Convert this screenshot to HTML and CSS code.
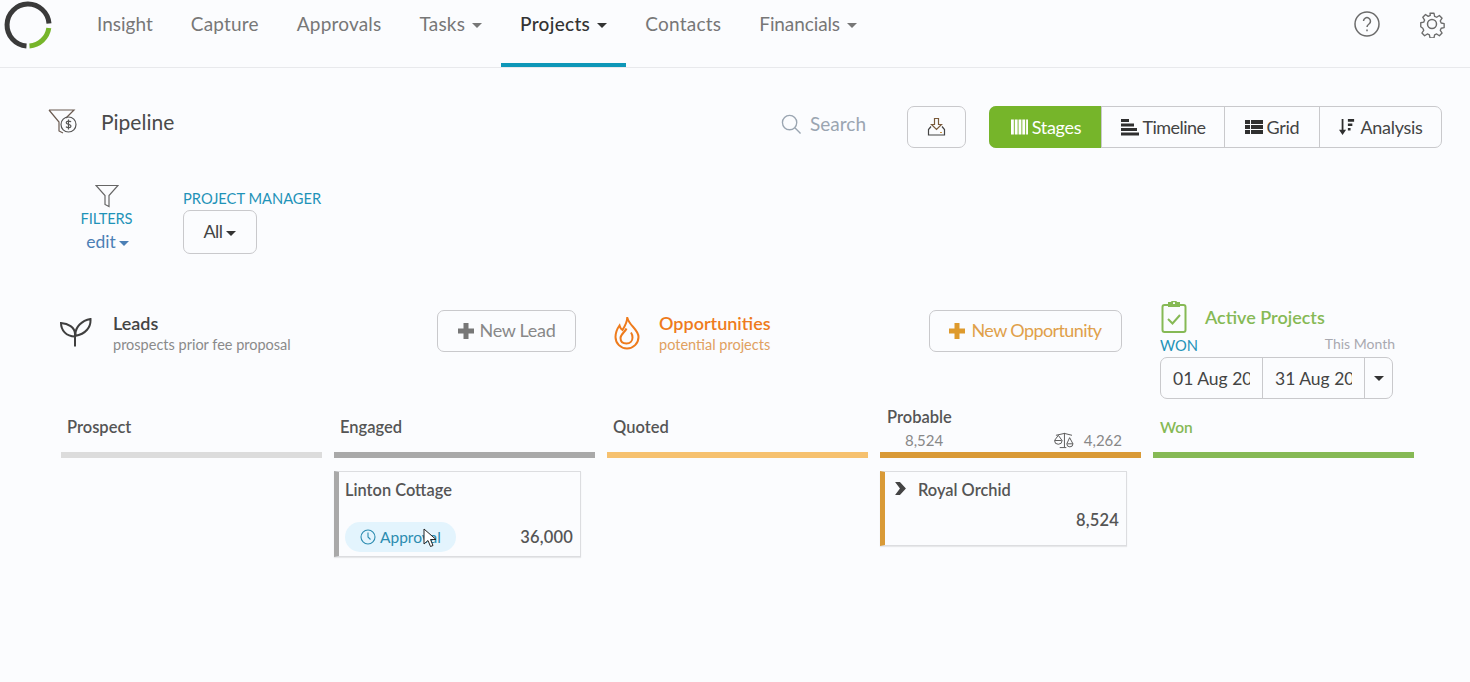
FILE: index.html
```html
<!DOCTYPE html>
<html lang="en">
<head>
<meta charset="utf-8">
<title>Pipeline</title>
<link rel="stylesheet" href="styles.css">
</head>
<body>
<header class="topbar">
  <svg class="logo" viewBox="0 0 48 48" width="48" height="48" fill="none" stroke-width="5">
    <path d="M45 22.500A21 21 0 1 0 22.500 45" stroke="#3a3a3a"/>
    <path d="M44.800 27A21 21 0 0 1 25.500 44.900" stroke="#76b52a"/>
  </svg>
  <nav class="nav">
    <a class="nav-item">Insight</a>
    <a class="nav-item">Capture</a>
    <a class="nav-item">Approvals</a>
    <a class="nav-item">Tasks<i class="caret"></i></a>
    <a class="nav-item active">Projects<i class="caret"></i></a>
    <a class="nav-item">Contacts</a>
    <a class="nav-item">Financials<i class="caret"></i></a>
  </nav>
  <div class="top-icons">
    <svg viewBox="0 0 26 26" width="26" height="26" fill="none" stroke="#6b6b6b" stroke-width="1.500"><circle cx="13" cy="13" r="12"/><path d="M9.500 10a3.500 3.500 0 1 1 5.500 3c-1.300.9-2 1.500-2 3"/><path d="M13 18.500v1.800"/></svg>
    <svg viewBox="0 0 28 28" width="28" height="28" fill="none" stroke="#6b6b6b" stroke-width="1.500" stroke-linejoin="round"><circle cx="14" cy="14" r="4.500"/><path d="M11.800 2h4.400l.7 3.500 2.300 1 3-2 3 3.100-2 3 1 2.300 3.300.7v4.400l-3.300.7-1 2.300 2 3-3 3.100-3-2-2.300 1-.7 3.300h-4.400l-.7-3.300-2.300-1-3 2-3-3.100 2-3-1-2.300L1.500 17v-4.400l3.300-.7 1-2.300-2-3 3-3.100 3 2 2.300-1z" transform="translate(1.400 1.400) scale(.9)"/></svg>
  </div>
</header>

<main>
  <section class="title-row">
    <div class="title">
      <svg viewBox="0 0 30 26" width="30" height="26" fill="none" stroke="#555" stroke-width="1.200"><path d="M1 2h25l-8 8M1 2l10 12v9l4 2" stroke="#6a5a50"/><circle cx="20.500" cy="16.500" r="7.500"/><path d="M23 14c-1-1.300-4.800-1.300-4.800.8s4.800 1.100 4.800 3.300-4 2-5 .6M20.500 11.500v10"/></svg>
      <h1>Pipeline</h1>
    </div>
    <div class="tools">
      <div class="search">
        <svg viewBox="0 0 22 22" width="21" height="21" fill="none" stroke="#9aa5b1" stroke-width="1.400"><circle cx="9" cy="9" r="7.500"/><path d="M14.500 14.500l6 6"/></svg>
        <span>Search</span>
      </div>
      <button class="btn export">
        <svg viewBox="0 0 20 20" width="20" height="20" fill="none" stroke="#444" stroke-width="1.200"><path d="M7.500 1.500h4v6h3l-5 5-5-5h3z" stroke="#7a5a3a"/><path d="M4 9.500l-2.500 3v5.500h16v-5.500l-2.500-3"/><path d="M13 15.500h2" stroke="#c89040"/></svg>
      </button>
      <div class="views">
        <button class="view on"><svg viewBox="0 0 18 18" width="17" height="18" fill="#fff"><path d="M0 1h3v16H0zM4 1h3v16H4zM8 1h3v16H8zM12 1h3v16h-3zM16 1h2v16h-2z"/></svg>Stages</button>
        <button class="view"><svg viewBox="0 0 18 18" width="18" height="18" fill="#2f2f2f"><path d="M0 1h8v3H0zM0 5.500h13v3H0zM0 10h16v3H0zM0 14.500h18v3H0z"/></svg>Timeline</button>
        <button class="view"><svg viewBox="0 0 18 18" width="18" height="18" fill="#2f2f2f"><path d="M0 2h5v4H0zM6 2h12v4H6zM0 7h5v4H0zM6 7h12v4H6zM0 12h5v4H0zM6 12h12v4H6z"/></svg>Grid</button>
        <button class="view"><svg viewBox="0 0 18 18" width="16" height="18" fill="#2f2f2f"><path d="M3 0h2v12h3l-4 6-4-6h3zM10 0h7v3h-7zM10 5h5v3h-5zM10 10h3v3h-3z"/></svg>Analysis</button>
      </div>
    </div>
  </section>

  <section class="filter-row">
    <div class="filters">
      <svg viewBox="0 0 24 24" width="24" height="24" fill="none" stroke="#666" stroke-width="1.200"><path d="M1 1.500h22l-9 10v11l-4-2v-9z"/></svg>
      <span class="label">FILTERS</span>
      <span class="edit">edit<i class="caret blue"></i></span>
    </div>
    <div class="pm">
      <span class="label">PROJECT MANAGER</span>
      <button class="btn all">All<i class="caret dark"></i></button>
    </div>
  </section>

  <section class="groups">
    <div class="group leads">
      <svg viewBox="0 0 34 30" width="34" height="30" fill="none" stroke="#3f3f3f" stroke-width="2"><path d="M15 28.500V16C15 9 8 5.500 1 5C1 12 6 18.500 15 18.500"/><path d="M15.500 17C15 9 22 2.500 30.500 1C31 9 26 16 15 18"/></svg>
      <div class="group-text"><strong>Leads</strong><small>prospects prior fee proposal</small></div>
      <button class="btn new grey"><svg class="plus" viewBox="0 0 16 16" width="16" height="16"><path d="M5.500 0h5v5.500H16v5h-5.500V16h-5v-5.500H0v-5h5.500z"/></svg><span>New Lead</span></button>
    </div>
    <div class="group opps">
      <svg viewBox="0 0 26 34" width="26" height="34" fill="none" stroke="#ee7b1c" stroke-width="2"><path d="M13.300 1C14 9 24.500 13 24.500 21A11.500 11.500 0 0 1 1.500 21C1.500 17 3 13 5.500 9.500C6 11.500 7 13 8.500 14C11 10 13.300 6 13.300 1z"/><path d="M12.500 12.500C11 16 6.500 18.500 6.500 22C6.500 25.500 9 27.500 12.500 27.500C16 27.500 18.500 25 18.500 21.500C18.500 19.500 18 18 17 16.500"/></svg>
      <div class="group-text"><strong>Opportunities</strong><small>potential projects</small></div>
      <button class="btn new amber"><svg class="plus" viewBox="0 0 16 16" width="16" height="16"><path d="M5.500 0h5v5.500H16v5h-5.500V16h-5v-5.500H0v-5h5.500z"/></svg><span>New Opportunity</span></button>
    </div>
    <div class="group active-projects">
      <div class="ap-head">
        <svg viewBox="0 0 26 32" width="26" height="32" fill="none" stroke="#86b955" stroke-width="2"><rect x="1.500" y="4" width="23" height="27" rx="2"/><path d="M8 4V2h3a2 2 0 0 1 4 0h3v3H8z"/><path d="M7 18l4.500 4.500L19 14"/></svg>
        <strong>Active Projects</strong>
      </div>
      <div class="ap-meta"><span class="label">WON</span><span class="month">This Month</span></div>
      <div class="dates">
        <input class="date" value="01 Aug 2021" readonly>
        <input class="date" value="31 Aug 2021" readonly>
        <span class="date-caret"><i class="caret dark"></i></span>
      </div>
    </div>
  </section>

  <section class="board">
    <div class="col">
      <div class="col-head"><span class="col-name">Prospect</span></div>
      <div class="bar c1"></div>
    </div>
    <div class="col">
      <div class="col-head"><span class="col-name">Engaged</span></div>
      <div class="bar c2"></div>
      <article class="card b2 tall">
        <div class="card-name">Linton Cottage</div>
        <div class="card-foot">
          <span class="pill"><svg viewBox="0 0 16 16" width="16" height="16" fill="none" stroke="#2c8cb0" stroke-width="1.100"><circle cx="8" cy="8" r="7"/><path d="M8 3.500V8l2.500 2.500"/></svg>Approval</span>
          <span class="amount">36,000</span>
        </div>
        <svg class="cursor" viewBox="0 0 14 20" width="14" height="20"><path d="M1 1v15l4-3.500 2.500 6 2.500-1-2.500-6H13z" fill="#fff" stroke="#222" stroke-width="1"/></svg>
      </article>
    </div>
    <div class="col">
      <div class="col-head"><span class="col-name">Quoted</span></div>
      <div class="bar c3"></div>
    </div>
    <div class="col">
      <div class="col-head two">
        <span class="col-name">Probable</span>
        <div class="col-vals">
          <span>8,524</span>
          <span class="weighted"><svg viewBox="0 0 22 18" width="21" height="17" fill="none" stroke="#555" stroke-width="1"><path d="M3 3.500l9-2 8 2M12 1v15M7 16.500h7"/><path d="M5.500 3.500L1.500 9a4 4 0 0 0 8 0zM2 9h7"/><path d="M17.500 6l-3 6.500a3 3 0 0 0 6.500 0zM15 12.500h6"/></svg>4,262</span>
        </div>
      </div>
      <div class="bar c4"></div>
      <article class="card b4">
        <div class="card-name"><svg class="chev" viewBox="0 0 10 12" width="11" height="13" fill="#444"><path d="M0 0h4.500l5.500 6-5.500 6H0l4.500-6z"/></svg>Royal Orchid</div>
        <div class="card-foot end"><span class="amount">8,524</span></div>
      </article>
    </div>
    <div class="col">
      <div class="col-head"><span class="col-name won">Won</span></div>
      <div class="bar c5"></div>
    </div>
  </section>
</main>
</body>
</html>
```

FILE: styles.css
```css
* { box-sizing: border-box; }
html, body { margin: 0; height: 100%; }
body {
  background: #fbfcfe;
  font-family: "Lato", "Noto Sans", sans-serif;
  color: #444;
  overflow: hidden;
}
button { font: inherit; background: none; cursor: pointer; }

.topbar {
  display: flex;
  align-items: flex-start;
  height: 68px;
  border-bottom: 1px solid #e8e9ec;
  padding-left: 4px;
}
.logo { margin-top: 1px; flex: none; }
.nav { display: flex; margin-left: 26px; height: 67px; }
.nav-item {
  display: flex;
  align-items: flex-start;
  padding: 12px 19px 0;
  font-size: 19px;
  line-height: 24px;
  letter-spacing: .2px;
  color: #777;
  border-bottom: 4px solid transparent;
}
.nav-item:first-child { letter-spacing: 0; }
.nav-item:nth-child(6) { letter-spacing: .25px; }
.nav-item:nth-child(7) { letter-spacing: -.1px; }
.nav-item.active { color: #333; border-bottom-color: #0e97b8; font-weight: 500; letter-spacing: .3px; }
.caret {
  display: inline-block;
  width: 0;
  height: 0;
  margin: 11px 0 0 7px;
  border-left: 5px solid transparent;
  border-right: 5px solid transparent;
  border-top: 5px solid #777;
}
.active .caret, .caret.dark { border-top-color: #333; }
.caret.blue { border-top-color: #4b7fb5; }
.top-icons { margin-left: auto; display: flex; gap: 38px; padding: 10px 24px 0 0; align-items: center; }

.title-row {
  display: flex;
  justify-content: space-between;
  padding: 38px 28px 0 48px;
  height: 106px;
}
.title { display: flex; gap: 23px; align-items: flex-start; }
.title svg { margin-top: 2px; }
h1 { margin: 2px 0 0; font-size: 21px; line-height: 28px; font-weight: 400; color: #4a4a4a; }
.tools { display: flex; align-items: flex-start; }
.search { display: flex; align-items: center; gap: 8px; height: 36px; color: #9aa5b1; font-size: 19px; margin-right: 41px; }
.search span { padding-bottom: 2px; }
.btn { border: 1px solid #c9c9cc; border-radius: 7px; }
.export { width: 59px; height: 42px; margin-right: 23px; display: flex; align-items: center; justify-content: center; padding: 0; }
.views { display: flex; height: 42px; border: 1px solid #c9c9cc; border-radius: 7px; }
.view {
  display: flex; align-items: center; justify-content: center; gap: 4px;
  border: 0; border-left: 1px solid #c9c9cc; padding: 0; font-size: 18px; letter-spacing: -.3px; color: #444;
}
.view:nth-child(1) { width: 112px; border-left: 0; margin: -1px 0 -1px -1px; height: 42px; background: #76b52a; color: #fff; border-radius: 7px 0 0 7px; padding-left: 2px; }
.view:nth-child(2) { width: 123px; letter-spacing: -.55px; }
.view:nth-child(3) { width: 95px; }
.view:nth-child(4) { width: 122px; gap: 5px; padding-left: 1px; }

.filter-row { display: flex; padding-left: 81px; height: 136px; padding-top: 10px; }
.filters { display: flex; flex-direction: column; align-items: center; width: 51px; }
.label { font-size: 14.700px; line-height: 18px; color: #1f93b8; }
.filters .label { letter-spacing: -.15px; }
.filters svg { margin-bottom: 1px; }
.edit { font-size: 17.500px; line-height: 24px; margin-top: 3px; color: #4b7fb5; display: flex; padding-left: 2px; }
.edit .caret { margin-left: 3px; }
.pm { display: flex; flex-direction: column; margin-left: 51px; padding-top: 5px; }
.all { margin-top: 3px; width: 74px; height: 44px; font-size: 18px; letter-spacing: -.6px; color: #444; display: flex; align-items: flex-start; justify-content: center; padding: 9px 0 0; }
.all .caret { margin-left: 4px; }

.groups { display: flex; height: 114px; align-items: flex-start; }
.group { display: flex; align-items: flex-start; }
.leads { width: 576px; padding-left: 61px; }
.leads > svg { margin: 8px 0 0 -1px; flex: none; }
.opps { width: 508px; margin-left: 38px; }
.opps > svg { margin-top: 6px; flex: none; }
.group-text { display: flex; flex-direction: column; margin-left: 19px; padding-top: 2px; }
.group-text strong { font-size: 18px; line-height: 22px; font-weight: 600; color: #444; margin-bottom: 1px; }
.group-text small { font-size: 14.500px; line-height: 20px; color: #8a8a8a; }
.opps .group-text strong { color: #ee7b1c; }
.opps .group-text small { color: #e0a060; }
.new { margin-left: auto; height: 42px; display: flex; align-items: center; justify-content: center; gap: 6px; font-size: 18px; padding: 0; }
.new span { padding-bottom: 2px; }
.leads .new { width: 139px; letter-spacing: -.3px; }
.opps .new { width: 193px; letter-spacing: -.6px; }
.grey { color: #888; }
.amber { color: #e0a04a; }
.plus { fill: #777; }
.amber .plus { fill: #de9a2d; }
.active-projects { flex-direction: column; margin-left: 38px; margin-top: -9px; width: 236px; }
.ap-head { display: flex; align-items: center; gap: 18px; padding-left: 1px; height: 32px; }
.ap-head strong { font-size: 18px; font-weight: 600; color: #86b955; }
.ap-meta { display: flex; justify-content: space-between; width: 235px; height: 20px; margin-top: 2px; }
.ap-meta .label { line-height: 20px; }
.month { font-size: 14px; color: #a9a9b0; line-height: 17px; }
.dates { display: flex; width: 233px; height: 42px; border: 1px solid #c9c9cc; border-radius: 7px; margin-top: 2px; }
.date { width: 102px; border: 0; border-right: 1px solid #c9c9cc; background: none; padding: 1px 12px 0; font: inherit; font-size: 17.500px; color: #444; outline: none; }
.date-caret { flex: 1; display: flex; justify-content: center; padding-top: 8px; }
.date-caret .caret { margin: 10px 0 0; }

.board { display: grid; grid-template-columns: repeat(5, 261px); gap: 12px; padding-left: 61px; margin-top: -16px; }
.col-head { height: 44px; padding: 10px 0 0 6px; }
.col-head.two { padding: 0 0 0 7px; }
.col-name { display: block; font-size: 16.500px; line-height: 19px; font-weight: 600; color: #555; }
.col-name.won { font-size: 15.500px; color: #86b955; padding-left: 1px; }
.col-vals { display: flex; justify-content: space-between; padding: 0 19px 0 18px; font-size: 15px; line-height: 19px; color: #888; margin-top: 4px; }
.weighted { display: flex; gap: 10px; align-items: center; }
.bar { height: 6px; margin-bottom: 13px; }
.c1 { background: #dcdcdc; }
.c2 { background: #a9a9a9; }
.c3 { background: #f6c16f; }
.c4 { background: #d99a37; }
.c5 { background: #86b955; }
.card {
  position: relative;
  width: 247px;
  height: 75px;
  border: 1px solid #dcdde0;
  border-left: 5px solid #a9a9a9;
  background: #fbfcfe;
  padding: 8px 6px 0 6px;
  box-shadow: 0 1px 1px rgba(0,0,0,.08);
}
.card.tall { height: 86px; }
.b2 { border-left-color: #a9a9a9; }
.b4 { border-left-color: #d99a37; }
.card-name { font-size: 16.400px; line-height: 20px; font-weight: 600; color: #555; display: flex; align-items: center; }
.chev { margin: 0 12px 3px 4px; flex: none; }
.card-foot { display: flex; justify-content: space-between; align-items: center; margin-top: 22px; }
.b4 .card-foot { margin-top: 10px; }
.card-foot.end { justify-content: flex-end; }
.pill { display: flex; align-items: center; gap: 4px; height: 30px; width: 111px; padding-left: 15px; border-radius: 15px; background: #e3f4fd; color: #2c8cb0; font-size: 15.500px; }
.amount { font-size: 16.500px; letter-spacing: .2px; font-weight: 600; color: #555; margin-right: 1px; }
.cursor { position: absolute; left: 84px; top: 56px; }
```
